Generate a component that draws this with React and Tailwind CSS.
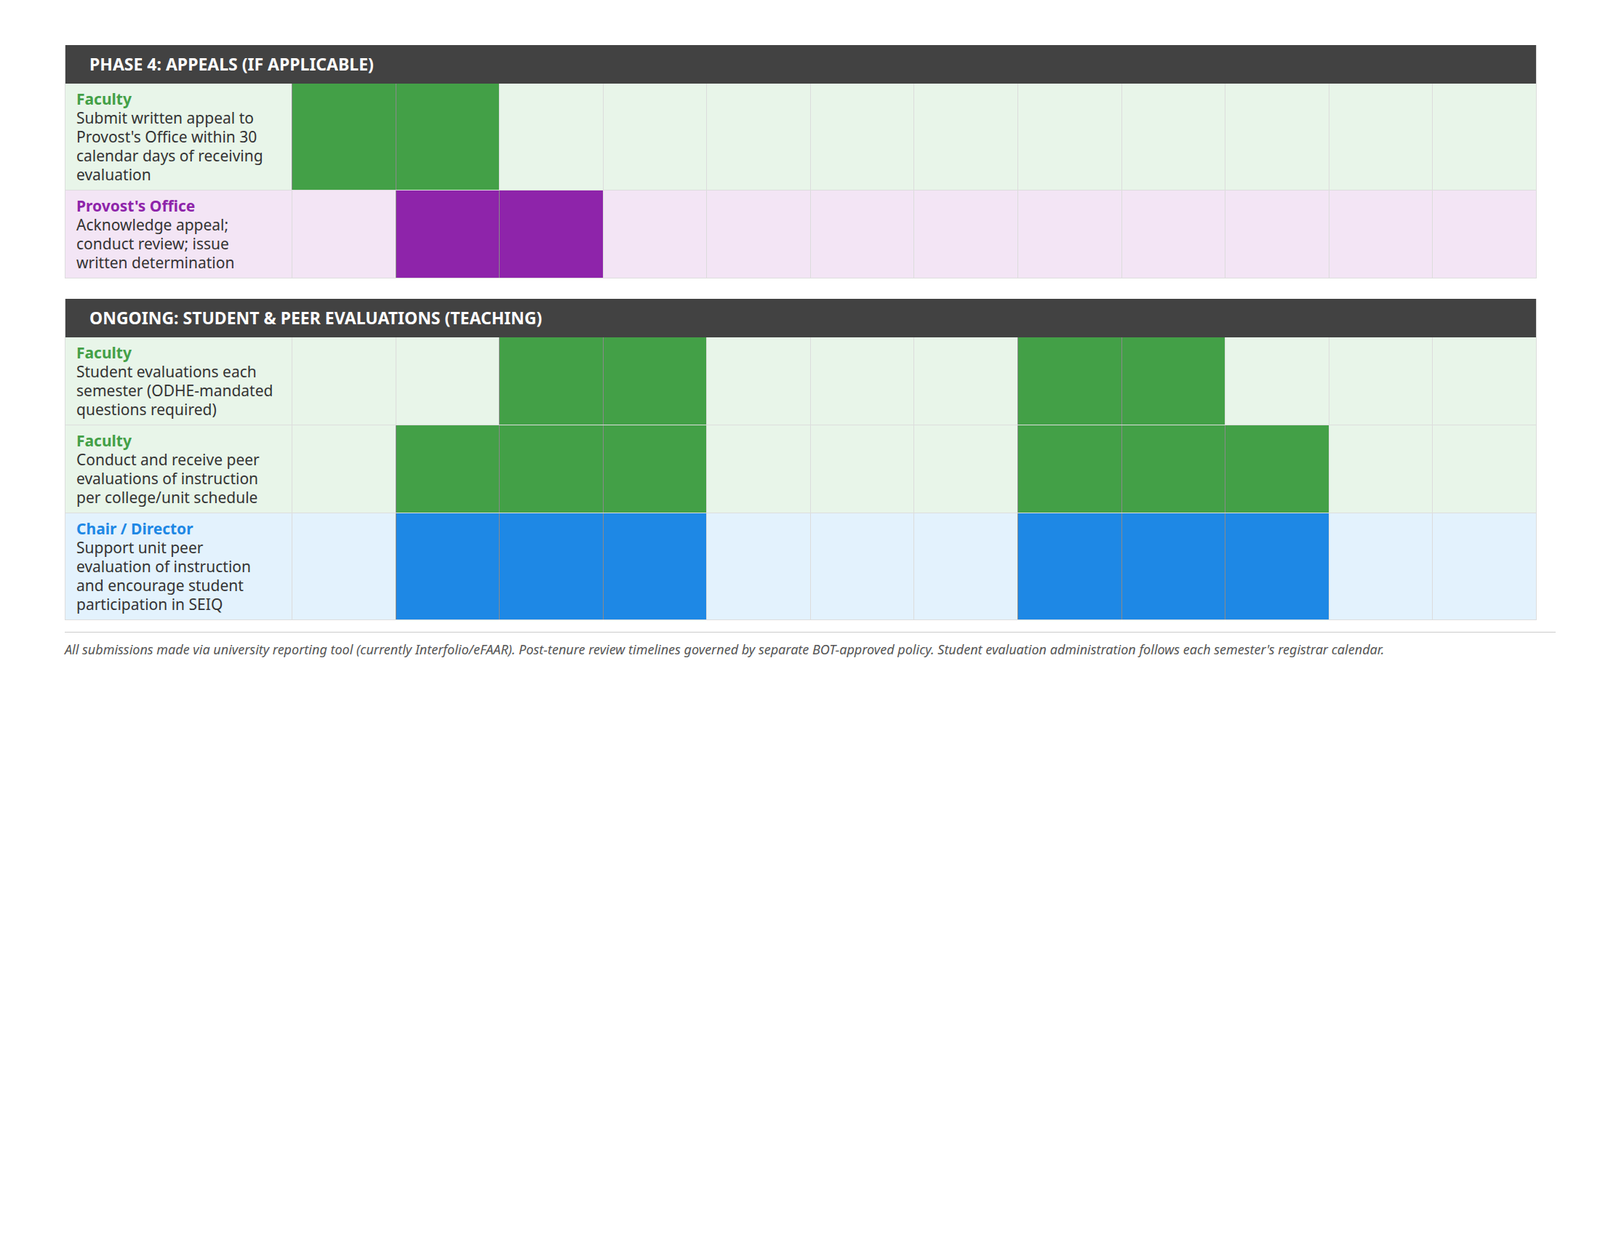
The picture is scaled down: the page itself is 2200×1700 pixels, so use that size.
const C = {
  g: { strong: "bg-[#43a047]", light: "bg-[#e8f5e9]", text: "text-[#43a047]" },
  p: { strong: "bg-[#8e24aa]", light: "bg-[#f3e5f5]", text: "text-[#8e24aa]" },
  b: { strong: "bg-[#1e88e5]", light: "bg-[#e3f2fd]", text: "text-[#1e88e5]" },
};

const sections = [
  {
    title: "PHASE 4: APPEALS (IF APPLICABLE)",
    rows: [
      { c: "g", who: "Faculty", desc: "Submit written appeal to Provost's Office within 30 calendar days of receiving evaluation", on: [0, 1] },
      { c: "p", who: "Provost's Office", desc: "Acknowledge appeal; conduct review; issue written determination", on: [1, 2] },
    ],
  },
  {
    title: "ONGOING: STUDENT & PEER EVALUATIONS (TEACHING)",
    rows: [
      { c: "g", who: "Faculty", desc: "Student evaluations each semester (ODHE-mandated questions required)", on: [2, 3, 7, 8] },
      { c: "g", who: "Faculty", desc: "Conduct and receive peer evaluations of instruction per college/unit schedule", on: [1, 2, 3, 7, 8, 9] },
      { c: "b", who: "Chair / Director", desc: "Support unit peer evaluation of instruction and encourage student participation in SEIQ", on: [1, 2, 3, 7, 8, 9] },
    ],
  },
];

function Row({ r }) {
  const col = C[r.c];
  return (
    <div className={`flex ${col.light} border-b border-[#dddddd]`}>
      <div className="w-[311px] shrink-0 px-[15px] py-[8px] text-[21px] leading-[26px] text-[#333333]">
        <div className={`font-bold ${col.text}`}>{r.who}</div>
        <div>{r.desc}</div>
      </div>
      <div className="flex-1 grid grid-cols-12">
        {Array.from({ length: 12 }).map((_, i) => {
          const on = r.on.includes(i);
          return (
            <div
              key={i}
              className={on ? `${col.strong} border-l border-[#8a8a8a]` : "border-l border-[#dcdcdc]"}
            />
          );
        })}
      </div>
    </div>
  );
}

export default function App() {
  return (
    <div className="bg-white w-[2200px] h-[1700px] pt-[62px] pl-[89px] font-['Liberation_Sans',Arial,sans-serif]">
      <div className="w-[2024px] flex flex-col gap-[28px]">
        {sections.map((s, i) => (
          <div key={i} className="border-x border-[#dddddd]">
            <div className="bg-[#424242] text-white font-bold text-[23px] h-[53px] flex items-center pl-[33px]">
              {s.title}
            </div>
            {s.rows.map((r, j) => (
              <Row key={j} r={r} />
            ))}
          </div>
        ))}
      </div>
      <div className="w-[2050px] border-t border-[#cccccc] mt-[16px] pt-[10px] text-[18px] italic text-[#555555]">
        All submissions made via university reporting tool (currently Interfolio/eFAAR). Post-tenure review timelines governed by separate BOT-approved policy. Student evaluation administration follows each semester's registrar calendar.
      </div>
    </div>
  );
}
